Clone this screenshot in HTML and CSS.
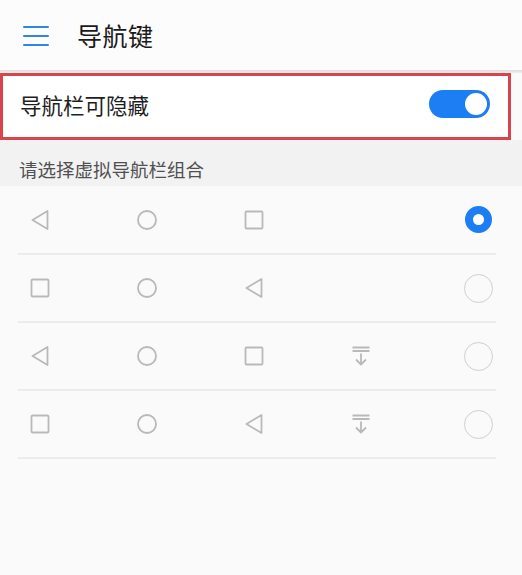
FILE: index.html
```html
<!DOCTYPE html>
<html lang="zh-CN">
<head>
<meta charset="utf-8">
<title>导航键</title>
<link rel="stylesheet" href="styles.css">
</head>
<body>
<div class="page">
  <header class="topbar">
    <span class="menu"><i></i><i></i><i></i></span>
    <h1 class="title">导航键</h1>
  </header>
  <div class="sep"></div>
  <div class="hide-row">
    <span class="hide-label">导航栏可隐藏</span>
    <span class="switch"><span class="knob"></span></span>
  </div>
  <div class="section">请选择虚拟导航栏组合</div>
  <div class="list">
    <div class="row">
      <span class="cell"><svg viewBox="0 0 20 20" class="ic"><path d="M17.5 1 L2.5 10 L17.5 19 Z"/></svg></span>
      <span class="cell"><svg viewBox="0 0 20 20" class="ic"><circle cx="10" cy="10" r="9"/></svg></span>
      <span class="cell"><svg viewBox="0 0 20 20" class="ic"><rect x="1.5" y="1.5" width="17" height="17" rx="1"/></svg></span>
      <span class="cell"></span>
      <span class="radio on"></span>
    </div>
    <div class="row">
      <span class="cell"><svg viewBox="0 0 20 20" class="ic"><rect x="1.5" y="1.5" width="17" height="17" rx="1"/></svg></span>
      <span class="cell"><svg viewBox="0 0 20 20" class="ic"><circle cx="10" cy="10" r="9"/></svg></span>
      <span class="cell"><svg viewBox="0 0 20 20" class="ic"><path d="M17.5 1 L2.5 10 L17.5 19 Z"/></svg></span>
      <span class="cell"></span>
      <span class="radio"></span>
    </div>
    <div class="row">
      <span class="cell"><svg viewBox="0 0 20 20" class="ic"><path d="M17.5 1 L2.5 10 L17.5 19 Z"/></svg></span>
      <span class="cell"><svg viewBox="0 0 20 20" class="ic"><circle cx="10" cy="10" r="9"/></svg></span>
      <span class="cell"><svg viewBox="0 0 20 20" class="ic"><rect x="1.5" y="1.5" width="17" height="17" rx="1"/></svg></span>
      <span class="cell"><svg viewBox="0 0 20 20" class="ic"><path d="M1.5 1.5 H18.5 M1.5 5 H18.5 M10 7.5 V19 M5 13.5 L10 18.5 L15 13.5"/></svg></span>
      <span class="radio"></span>
    </div>
    <div class="row">
      <span class="cell"><svg viewBox="0 0 20 20" class="ic"><rect x="1.5" y="1.5" width="17" height="17" rx="1"/></svg></span>
      <span class="cell"><svg viewBox="0 0 20 20" class="ic"><circle cx="10" cy="10" r="9"/></svg></span>
      <span class="cell"><svg viewBox="0 0 20 20" class="ic"><path d="M17.5 1 L2.5 10 L17.5 19 Z"/></svg></span>
      <span class="cell"><svg viewBox="0 0 20 20" class="ic"><path d="M1.5 1.5 H18.5 M1.5 5 H18.5 M10 7.5 V19 M5 13.5 L10 18.5 L15 13.5"/></svg></span>
      <span class="radio"></span>
    </div>
  </div>
</div>
</body>
</html>
```
FILE: styles.css
```css
html, body {
  margin: 0;
  padding: 0;
}
body {
  background: #fafafa;
  font-family: "Noto Sans CJK SC", "Noto Sans", sans-serif;
  width: 522px;
  height: 575px;
  overflow: hidden;
}
.page {
  width: 522px;
  min-height: 575px;
  background: #fafafa;
}
.topbar {
  height: 70px;
  background: #fcfcfc;
  display: flex;
  align-items: center;
  padding-left: 23px;
  box-sizing: border-box;
}
.menu {
  display: flex;
  flex-direction: column;
  gap: 7px;
  width: 26px;
  margin-top: 2px;
}
.menu i {
  display: block;
  height: 2px;
  background: #2f86e6;
  border-radius: 1px;
}
.title {
  margin: 0 0 0 28px;
  font-size: 25px;
  font-weight: 400;
  color: #1a1a1a;
  letter-spacing: 0.5px;
}
.sep {
  height: 3px;
  background: linear-gradient(#dcdcdc, #efefef);
}
.hide-row {
  width: 511px;
  height: 67px;
  box-sizing: border-box;
  border: 3px solid #d9434b;
  background: #ffffff;
  display: flex;
  align-items: center;
  justify-content: space-between;
  padding: 0 18px 0 17px;
}
.hide-label {
  font-size: 21.5px;
  color: #1e1e1e;
  margin-top: -5px;
}
.switch {
  width: 61px;
  height: 28px;
  border-radius: 14px;
  background: #1b7ef2;
  display: flex;
  align-items: center;
  justify-content: flex-end;
  padding-right: 3px;
  box-sizing: border-box;
  margin-top: -5px;
}
.knob {
  width: 22px;
  height: 22px;
  border-radius: 50%;
  background: #fff;
}
.section {
  height: 46px;
  box-sizing: border-box;
  background: #f2f2f2;
  padding: 16px 0 0 19px;
  font-size: 18.5px;
  line-height: 26px;
  color: #505050;
}
.list {
  margin: 0 26px 0 18px;
}
.row {
  height: 68px;
  border-bottom: 2px solid #ececec;
  box-sizing: border-box;
  display: flex;
  align-items: center;
  padding-left: 12px;
}
.row:first-child {
  height: 69px;
}
.cell {
  width: 107px;
  height: 20px;
  display: flex;
}
.ic {
  width: 20px;
  height: 20px;
  fill: none;
  stroke: #b9b9b9;
  stroke-width: 1.8;
  stroke-linejoin: round;
}
.radio {
  margin-left: auto;
  margin-right: 3px;
  width: 29px;
  height: 29px;
  border-radius: 50%;
  border: 1.5px solid #cfcfcf;
  box-sizing: border-box;
}
.radio.on {
  width: 27px;
  height: 27px;
  margin-right: 4px;
  border: 8px solid #1b7ef2;
  background: #fff;
}
```
